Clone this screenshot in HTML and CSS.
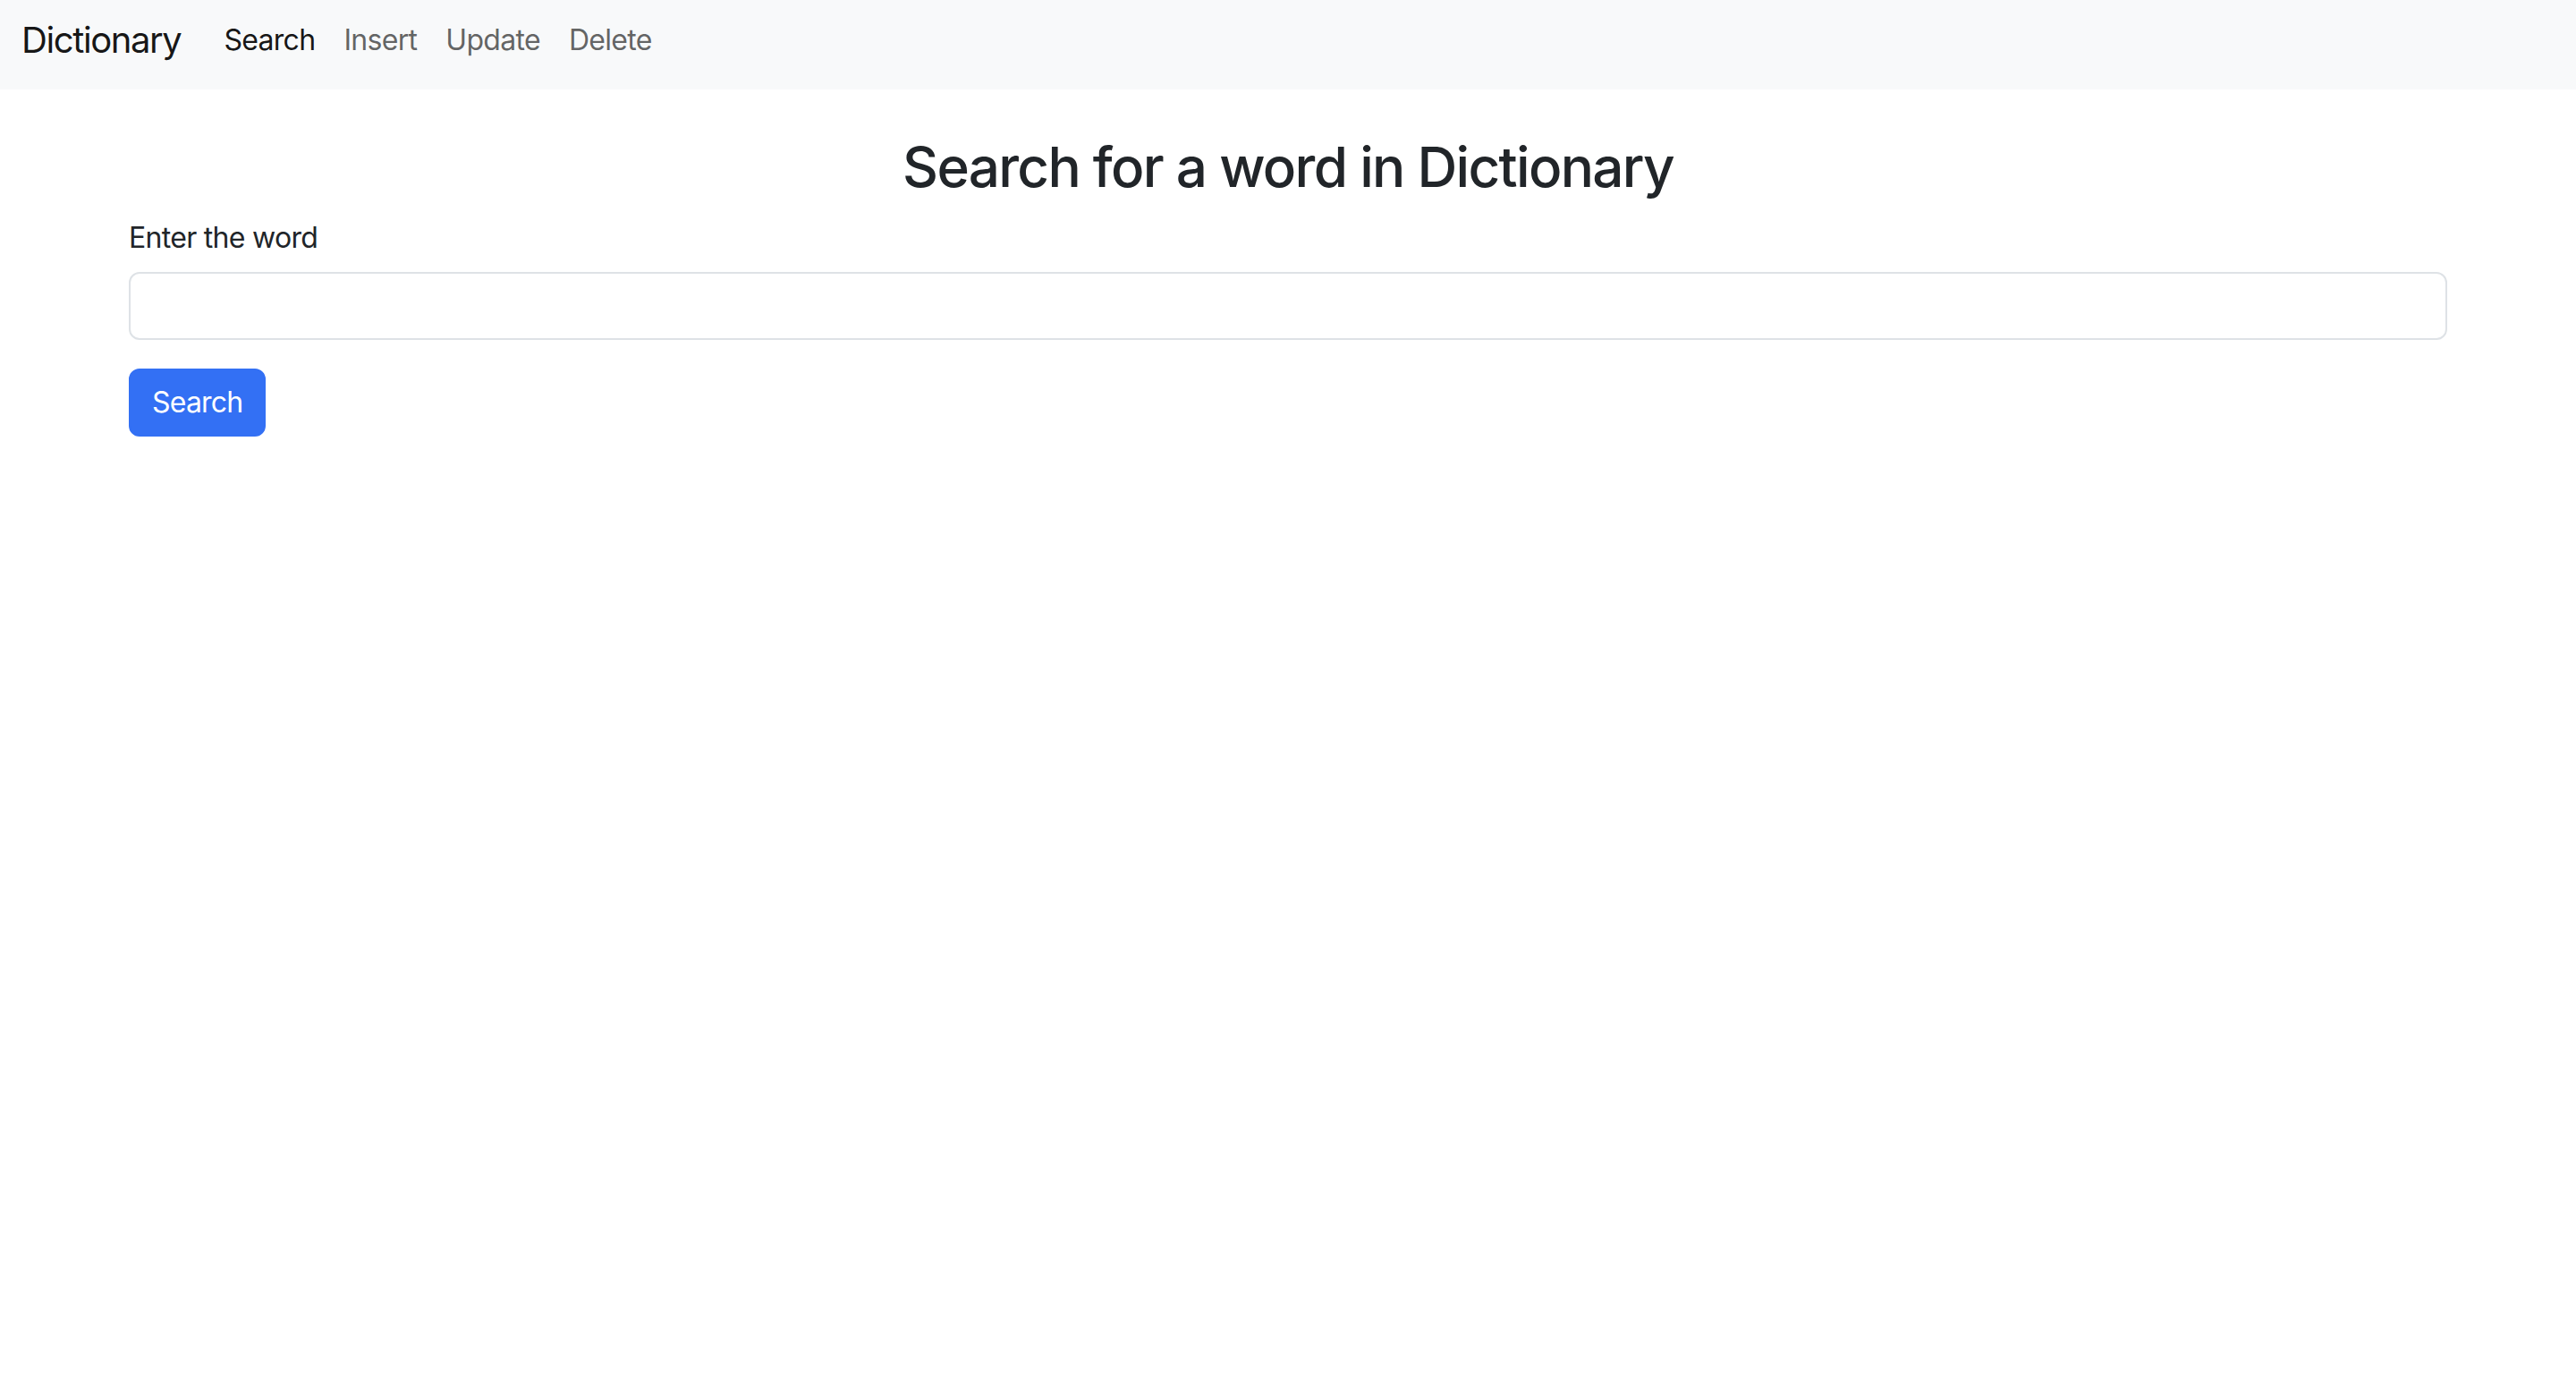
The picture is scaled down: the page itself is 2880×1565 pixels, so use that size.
FILE: index.html
```html
<!DOCTYPE html>
<html lang="en">
<head>
<meta charset="utf-8">
<title>Dictionary</title>
<link rel="stylesheet" href="styles.css">
</head>
<body>
<nav class="navbar">
  <a class="brand" href="#">Dictionary</a>
  <ul class="nav">
    <li><a class="nav-link active" href="#">Search</a></li>
    <li><a class="nav-link" href="#">Insert</a></li>
    <li><a class="nav-link" href="#">Update</a></li>
    <li><a class="nav-link" href="#">Delete</a></li>
  </ul>
</nav>
<main class="container">
  <h2 class="title">Search for a word in Dictionary</h2>
  <form class="form">
    <label class="label" for="word">Enter the word</label>
    <input class="input" id="word" type="text">
    <button class="btn" type="button">Search</button>
  </form>
</main>
</body>
</html>
```
FILE: styles.css
```css
* { box-sizing: border-box; }
html, body { margin: 0; padding: 0; }
body {
  font-family: Inter, "Noto Sans", "Liberation Sans", sans-serif;
  font-size: 32px;
  line-height: 1.5;
  color: #212529;
  background: #fff;
}
.navbar {
  height: 100px;
  background: #f8f9fa;
  display: flex;
  align-items: center;
  padding: 0 24px 10px;
}
.brand {
  font-size: 40px;
  color: rgba(0,0,0,0.92);
  text-decoration: none;
  margin-right: 32px;
  letter-spacing: -1.4px;
}
.nav {
  display: flex;
  list-style: none;
  margin: 0;
  padding: 0;
}
.nav-link {
  display: block;
  padding: 4px 16px;
  color: rgba(0,0,0,0.62);
  text-decoration: none;
  font-size: 32px;
  letter-spacing: -0.7px;
}
.nav-link.active { color: rgba(0,0,0,0.92); }
.container {
  max-width: 2640px;
  margin: 0 auto;
  padding: 0 24px;
}
.title {
  margin: 50px 0 18px;
  text-align: center;
  font-size: 62px;
  font-weight: 500;
  line-height: 1.2;
  letter-spacing: -1.7px;
}
.form { display: flex; flex-direction: column; align-items: flex-start; }
.label {
  display: block;
  margin-bottom: 14px;
  letter-spacing: -0.7px;
}
.input {
  display: block;
  width: 100%;
  height: 76px;
  padding: 12px 24px;
  font: inherit;
  border: 2px solid #dee2e6;
  border-radius: 12px;
  background: #fff;
  margin-bottom: 32px;
}
.btn {
  font: inherit;
  height: 76px;
  padding: 0 24px;
  color: #fff;
  background: #3370f4;
  border: 2px solid #3370f4;
  border-radius: 12px;
  letter-spacing: -0.8px;
}
```
